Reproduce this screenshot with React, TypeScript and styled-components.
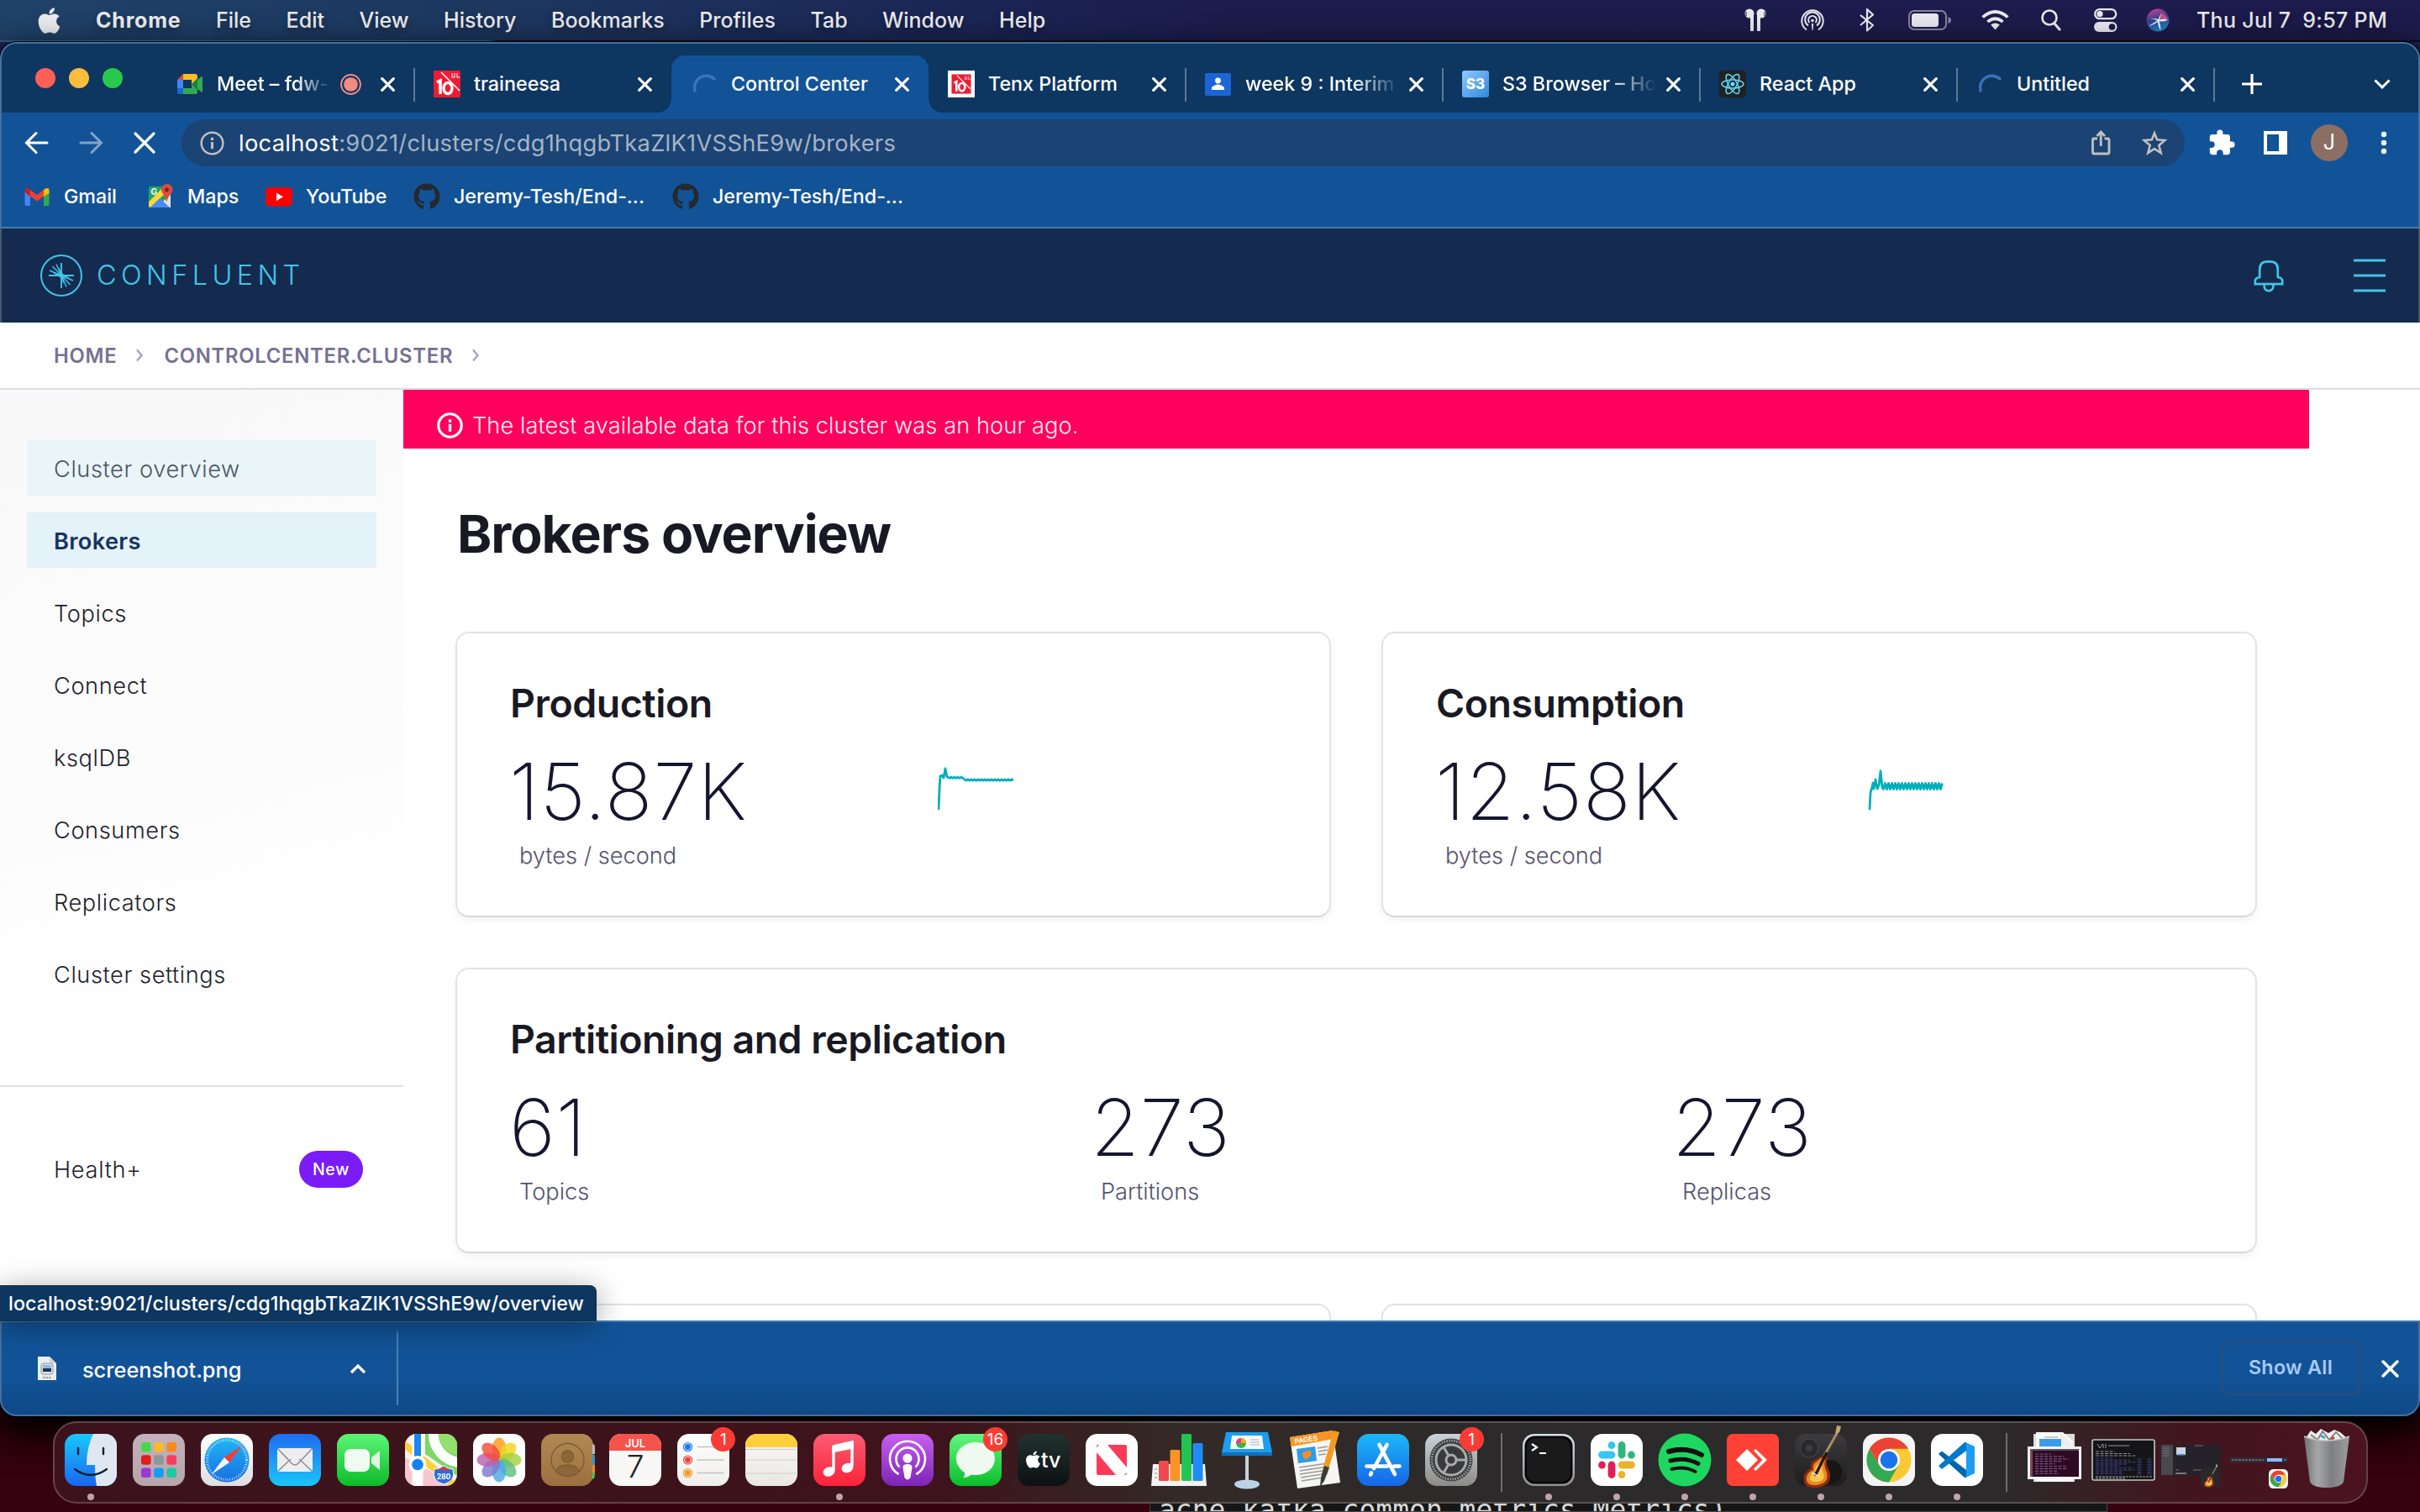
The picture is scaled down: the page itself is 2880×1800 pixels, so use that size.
import React from "react";
import styled, { createGlobalStyle, css } from "styled-components";
import { FaApple, FaGithub } from "react-icons/fa";
import { MdExtension } from "react-icons/md";

const UI = `Inter, "Liberation Sans", sans-serif`;
const CYAN = "#43c3e6";

const Global = createGlobalStyle`
  * { box-sizing: border-box; }
  html, body { margin: 0; padding: 0; width: 2880px; height: 1800px; overflow: hidden; }
  body { font-family: ${UI}; -webkit-font-smoothing: antialiased; }
  svg { display: block; flex: none; }
`;

const Desktop = styled.div`
  position: relative;
  width: 2880px;
  height: 1800px;
  overflow: hidden;
  display: flex;
  flex-direction: column;
  background: linear-gradient(180deg, #24557c 0, #1c1c4b 60px, #1c1c4b 900px, #2c000c 1500px, #37020f 100%);
`;

/* ---------- macOS menu bar ---------- */
const MenuBar = styled.header`
  height: 48px;
  flex: none;
  display: flex;
  align-items: center;
  padding: 0 39px 0 41px;
  color: #ebebf0;
  font-size: 25px;
  font-weight: 500;
  background: linear-gradient(90deg, #1f4268 0, #1d375f 600px, #1b2252 1250px, #1c1b4b 1500px, #1d1b4b 100%);
  text-shadow: 0 4px 8px rgba(0, 0, 0, 0.35);
`;
const MenuEdge = styled.div`
  height: 2px;
  flex: none;
  background: linear-gradient(90deg, #34618a 0, #2f7ea8 140px, #2a6e98 580px, #11102e 590px, #0b0b20 100%);
`;
const MenuItems = styled.nav`
  display: flex;
  margin-left: 38px;
  gap: 41.5px;
  flex: 1;
`;
const MenuItem = styled.span<{ $strong?: boolean }>`
  line-height: 47px;
  letter-spacing: 0.02px;
  ${(p) => p.$strong && css`font-weight: 700; letter-spacing: 0.8px;`}
`;
const StatusIcons = styled.div`
  display: flex;
  align-items: center;
  color: #e8e8ee;
`;
const StatusIcon = styled.span<{ $w: number; $gap: number }>`
  display: flex;
  justify-content: center;
  width: ${(p) => p.$w}px;
  margin-right: ${(p) => p.$gap}px;
`;
const Clock = styled.span`
  letter-spacing: 0.3px;
  white-space: pre;
  line-height: 46px;
`;

/* ---------- browser window ---------- */
const Window = styled.section`
  position: relative;
  height: 1636px;
  flex: none;
  display: flex;
  flex-direction: column;
  padding: 2px;
  border-radius: 20px;
  overflow: hidden;
  background: #125398;
  box-shadow: 0 0 0 1px #000, 0 18px 40px 6px #000;
  z-index: 1;
  &::before {
    content: "";
    position: absolute;
    inset: 0;
    border: 2px solid #47719b;
    border-radius: 20px;
    z-index: 1;
    pointer-events: none;
  }
`;
const TabStrip = styled.div`
  height: 84px;
  flex: none;
  display: flex;
  margin: -2px -2px 0;
  padding: 2px 2px 0;
  background: #0d3660;
  color: #fff;
`;
const Lights = styled.div`
  width: 185px;
  display: flex;
  align-items: center;
  gap: 16px;
  padding-left: 40px;
`;
const Light = styled.i<{ $c: string }>`
  width: 24px;
  height: 24px;
  border-radius: 50%;
  background: ${(p) => p.$c};
`;
const Tabs = styled.div`
  display: flex;
  padding-top: 14px;
`;
const TabBox = styled.div<{ $active?: boolean; $line?: boolean }>`
  position: relative;
  width: 306px;
  height: 68px;
  display: flex;
  align-items: center;
  padding: 0 23px;
  font-size: 23.3px;
  font-weight: 500;
  border-radius: 16px 16px 0 0;
  background: ${(p) => (p.$active ? "#125398" : "transparent")};
  ${(p) =>
    p.$line &&
    css`
      &::after {
        content: "";
        position: absolute;
        right: -1px;
        top: 15px;
        width: 2px;
        height: 40px;
        background: #5d7994;
      }
    `}
  ${(p) =>
    p.$active &&
    css`
      &::before,
      &::after {
        content: "";
        position: absolute;
        bottom: 0;
        width: 16px;
        height: 16px;
      }
      &::before { left: -16px; background: radial-gradient(circle at 0 0, transparent 15.5px, #125398 16px); }
      &::after { right: -16px; background: radial-gradient(circle at 100% 0, transparent 15.5px, #125398 16px); }
    `}
`;
const TabTitle = styled.span<{ $fade?: boolean }>`
  flex: 1;
  min-width: 0;
  margin-left: 16px;
  line-height: 66px;
  white-space: nowrap;
  overflow: hidden;
  ${(p) => p.$fade && css`mask-image: linear-gradient(90deg, #000 70%, transparent 100%);`}
`;
const TabEnd = styled.span`
  display: flex;
  align-items: center;
  gap: 23px;
  padding-left: 12px;
`;
const StripEnd = styled.div`
  flex: 1;
  display: flex;
  align-items: center;
  justify-content: space-between;
  padding: 14px 33px 0 33px;
`;
const Toolbar = styled.div`
  height: 72px;
  flex: none;
  display: flex;
  align-items: center;
  color: #fff;
  padding-left: 26px;
`;
const NavButtons = styled.div`
  display: flex;
  gap: 32px;
  width: 188px;
`;
const Omnibox = styled.div`
  width: 2384px;
  height: 56px;
  display: flex;
  align-items: center;
  border-radius: 28px;
  background: #1b4373;
  padding: 0 21px 0 22px;
`;
const Url = styled.span`
  flex: 1;
  margin-left: 17px;
  font-size: 27.3px;
  letter-spacing: 0.28px;
  color: #a4b4c7;
`;
const Host = styled.b`
  font-weight: 400;
  color: #fff;
`;
const OmniEnd = styled.div`
  display: flex;
  gap: 34px;
`;
const ToolEnd = styled.div`
  flex: 1;
  display: grid;
  grid-template-columns: 61px 57px 82px auto;
  align-items: center;
  padding-left: 27px;
`;
const PanelIcon = styled.svg`
  margin-left: 6px;
`;
const Avatar = styled.span`
  width: 44px;
  height: 44px;
  margin-left: 5px;
  border-radius: 50%;
  background: #8d6e63;
  font-size: 25px;
  line-height: 43px;
  text-align: center;
`;
const Bookmarks = styled.nav`
  height: 66px;
  flex: none;
  display: flex;
  align-items: center;
  padding: 0 26px 8px;
  border-bottom: 2px solid #447aaf;
  color: #fff;
  font-size: 23.3px;
  font-weight: 500;
`;
const Bookmark = styled.span<{ $w: number }>`
  width: ${(p) => p.$w}px;
  display: flex;
  align-items: center;
  gap: 16px;
  line-height: 56px;
  letter-spacing: -0.05px;
  white-space: nowrap;
`;

/* ---------- Control Center page ---------- */
const Page = styled.div`
  position: relative;
  z-index: 2;
  height: 1300px;
  flex: none;
  margin: 0 -2px;
  display: flex;
  flex-direction: column;
  background: #fff;
  overflow: hidden;
`;
const PageHeader = styled.header`
  height: 112px;
  flex: none;
  display: flex;
  align-items: center;
  justify-content: space-between;
  padding: 0 39px 0 46px;
  border: solid #46586f;
  border-width: 0 2px;
  background: #142b4f;
`;
const Brand = styled.div`
  display: flex;
  align-items: center;
  gap: 17px;
  color: ${CYAN};
  font-size: 32.5px;
  font-weight: 300;
  letter-spacing: 5.4px;
  line-height: 60px;
`;
const HeaderIcons = styled.div`
  display: flex;
  align-items: center;
  gap: 83px;
`;
const Crumbs = styled.nav`
  height: 80px;
  flex: none;
  display: flex;
  align-items: center;
  padding-left: 64px;
  border-bottom: 2px solid #dcdce5;
  color: #767193;
  font-size: 23.8px;
  font-weight: 600;
  letter-spacing: 0.75px;
`;
const CrumbArrow = styled.svg`
  margin: 0 24px 0 22px;
`;
const Body = styled.div`
  flex: 1;
  min-height: 0;
  display: flex;
`;
const Sidebar = styled.aside`
  width: 480px;
  flex: none;
  padding-top: 60px;
  background: linear-gradient(165deg, #f9f9fa 0, #fbfbfc 380px, #fff 800px);
`;
const NavList = styled.ul`
  list-style: none;
  margin: 0;
  padding: 0 32px 100px;
  display: flex;
  flex-direction: column;
  gap: 20px;
  border-bottom: 2px solid #dedfe6;
`;
const NavLink = styled.li<{ $state?: "hover" | "active" }>`
  height: 66px;
  padding-left: 32px;
  line-height: 69px;
  font-size: 27.2px;
  letter-spacing: ${(p) => (p.$state === "active" ? 0.35 : 0.6)}px;
  font-weight: ${(p) => (p.$state === "active" ? 600 : 300)};
  color: ${(p) => (p.$state === "active" ? "#173361" : p.$state === "hover" ? "#4c5560" : "#1e1f2b")};
  background: ${(p) => (p.$state === "active" ? "#e4f2fa" : p.$state === "hover" ? "#eaf5fa" : "none")};
`;
const HealthRow = styled.div`
  margin-top: 65px;
  height: 66px;
  display: flex;
  align-items: center;
  justify-content: space-between;
  padding: 0 48px 0 64px;
  font-size: 27.2px;
  font-weight: 300;
  letter-spacing: 0.7px;
  color: #1e1f2b;
`;
const NewPill = styled.span`
  width: 76px;
  height: 44px;
  border-radius: 22px;
  background: #7a1cf5;
  color: #fff;
  font-size: 19.5px;
  font-weight: 500;
  line-height: 44px;
  text-align: center;
`;
const Main = styled.main`
  width: 2268px;
`;
const Banner = styled.div`
  height: 70px;
  display: flex;
  align-items: center;
  padding: 15px 0 0 40px;
  gap: 11px;
  background: #ff005c;
  color: #ffeef4;
  font-size: 27.2px;
  font-weight: 300;
  letter-spacing: 0.08px;
`;
const Content = styled.div`
  padding: 61px 62px 0;
`;
const Heading = styled.h1`
  margin: 0 0 77px;
  padding-left: 2px;
  font-size: 62.5px;
  line-height: 80px;
  font-weight: 700;
  letter-spacing: -1px;
  color: #191924;
`;
const Cards = styled.div`
  display: grid;
  grid-template-columns: 1fr 1fr;
  gap: 60px;
`;
const Card = styled.section<{ $wide?: boolean }>`
  height: 340px;
  grid-column: ${(p) => (p.$wide ? "1 / -1" : "auto")};
  padding: 53px 0 0 62px;
  border: 2px solid #e3e3e6;
  border-bottom-color: #d9d9dc;
  border-radius: 16px;
  background: #fff;
  box-shadow: 0 4px 8px rgba(0, 0, 0, 0.06);
`;
const CardTitle = styled.h2`
  margin: 0 0 20px;
  padding-left: 1px;
  font-size: 46.5px;
  line-height: 60px;
  font-weight: 600;
  letter-spacing: -0.5px;
  color: #191924;
`;
const Metrics = styled.div`
  display: grid;
  grid-template-columns: 510px 120px;
`;
const Stats = styled.div`
  display: grid;
  grid-template-columns: 692px 692px auto;
`;
const Value = styled.div`
  font-size: 94px;
  line-height: 110px;
  font-weight: 200;
  letter-spacing: 0.8px;
  color: #15152f;
`;
const Label = styled.div`
  margin-top: 2px;
  padding-left: 12px;
  font-size: 27.2px;
  line-height: 40px;
  font-weight: 300;
  color: #55536f;
`;
const Spark = styled.svg`
  margin-top: 23px;
`;

/* ---------- downloads shelf ---------- */
const Shelf = styled.footer`
  flex: 1;
  display: flex;
  align-items: center;
  margin: 0 -2px -2px;
  padding: 0 25px 2px 44px;
  border-top: 2px solid #447aaf;
  color: #fff;
  background: linear-gradient(180deg, #125398 0, #125398 55%, #0f4986 100%);
`;
const DownloadItem = styled.div`
  width: 430px;
  height: 88px;
  display: flex;
  align-items: center;
  border-right: 2px solid #4d80b2;
  font-size: 25.3px;
  font-weight: 500;
`;
const FileName = styled.span`
  flex: 1;
  margin-left: 30px;
  line-height: 88px;
  padding-top: 4px;
`;
const Caret = styled.svg`
  margin-right: 36px;
`;
const ShelfSpace = styled.div`
  flex: 1;
`;
const ShowAll = styled.button`
  width: 164px;
  height: 64px;
  margin-right: 26px;
  padding: 0 0 3px;
  border: 2px solid #2d4d74;
  border-radius: 8px;
  background: none;
  color: #a9c7f5;
  font: 600 23.3px ${UI};
  letter-spacing: 0.3px;
`;
const StatusBubble = styled.div`
  position: absolute;
  left: 0;
  top: 1530px;
  width: 710px;
  height: 43px;
  padding-left: 10px;
  border: solid #1d2b3a;
  border-width: 1px 1px 1px 0;
  border-radius: 0 8px 0 0;
  background: #0d3660;
  color: #fff;
  font-size: 23.3px;
  font-weight: 500;
  line-height: 41px;
  letter-spacing: 0.05px;
  white-space: nowrap;
  box-shadow: 0 6px 36px rgba(0, 0, 0, 0.38);
  z-index: 2;
`;

/* ---------- terminal behind the dock ---------- */
const Terminal = styled.div`
  position: absolute;
  left: 1368px;
  top: 1600px;
  width: 1140px;
  height: 200px;
  padding: 178px 0 0 10px;
  border: 1px solid #454545;
  background: #161616;
  color: #d8d8d8;
  font: 33px/38px "DejaVu Sans Mono", monospace;
  white-space: pre;
  overflow: hidden;
`;

/* ---------- dock ---------- */
const DockArea = styled.div`
  flex: 1;
  display: flex;
  padding: 6px 62px 10px 63px;
  z-index: 1;
`;
const Dock = styled.div`
  flex: 1;
  height: 98px;
  display: flex;
  border: 2px solid rgba(255, 255, 255, 0.2);
  border-radius: 28px;
  padding-left: 3px;
  background: linear-gradient(90deg, #3c131c 0, #3e131b 38%, #332a27 49%, #2c2a2b 62%, #2c2a2b 84%, #42161f 92%, #4a131f 100%);
  z-index: 1;
`;
const Slot = styled.div`
  position: relative;
  width: 80.95px;
  flex: none;
  display: flex;
  flex-direction: column;
  align-items: center;
  padding-top: 13px;
`;
const DockSvg = styled.svg`
  width: 62px;
  height: 62px;
  overflow: visible;
`;
const RunDot = styled.i`
  width: 8px;
  height: 8px;
  margin-top: 9px;
  border-radius: 50%;
  background: #c0a3ab;
`;
const Badge = styled.span`
  position: absolute;
  top: 5px;
  right: 2px;
  width: 29px;
  height: 29px;
  border-radius: 50%;
  background: #fb3c35;
  color: #fff;
  font-size: 19px;
  line-height: 29px;
  text-align: center;
`;
const DockLine = styled.i<{ $l: number; $r: number }>`
  width: 2px;
  height: 70px;
  margin: 12px ${(p) => p.$r}px 0 ${(p) => p.$l}px;
  background: rgba(255, 255, 255, 0.32);
`;
const Shelved = styled.svg<{ $gap: number }>`
  margin-right: ${(p) => p.$gap}px;
  overflow: visible;
`;

/* ---------- small drawings ---------- */
const Cross = ({ s = 17, w = 3.2 }: { s?: number; w?: number }) => (
  <svg width={s} height={s} viewBox="0 0 20 20" stroke="#fff" strokeWidth={(w * 20) / s} strokeLinecap="round">
    <path d="M2 2L18 18M18 2L2 18" />
  </svg>
);
const Spinner = ({ c }: { c: string }) => (
  <svg width="32" height="32" viewBox="0 0 32 32" fill="none" stroke={c} strokeWidth="3.6" strokeLinecap="round">
    <path d="M5 24 A14 14 0 0 1 28 10" />
  </svg>
);
const MeetIcon = () => (
  <svg width="32" height="32" viewBox="0 0 32 32">
    <path d="M1 11L8 4V11Z" fill="#ea4335" />
    <path d="M1 11H8V21H1Z" fill="#4285f4" />
    <path d="M1 21H8V28H3Q1 28 1 26Z" fill="#1967d2" />
    <path d="M8 4H22Q25 4 25 7V11L18 17V11H8Z" fill="#fbbc2a" />
    <path d="M8 21H18V16L25 22V26Q25 28 22 28H8Z" fill="#34a853" />
    <path d="M18 16L25 9V23Z" fill="#188038" />
    <path d="M25 11L30 7Q31 7 31 8V25Q30 26 29 25L25 22Z" fill="#34a853" />
  </svg>
);
const RecordIcon = () => (
  <svg width="25" height="25" viewBox="0 0 24 24">
    <circle cx="12" cy="12" r="11" fill="none" stroke="#f28b82" strokeWidth="1.8" />
    <circle cx="12" cy="12" r="8" fill="#f28b82" />
  </svg>
);
const TenIcon = ({ framed }: { framed?: boolean }) => (
  <svg width="32" height="32" viewBox="0 0 32 32">
    <rect width="32" height="32" fill={framed ? "#fff" : "#ee1c33"} />
    <g transform={framed ? "translate(4.5 4.5) scale(.72)" : ""}>
      <rect width="32" height="32" fill="#ee1c33" />
      <path d="M9 2L31 24" stroke="#fff" strokeWidth="1.6" />
      <path d="M4 14L8 12V28" stroke="#fff" strokeWidth="3.6" fill="none" />
      <ellipse cx="17" cy="21" rx="5" ry="6.5" stroke="#fff" strokeWidth="3.4" fill="none" />
      <path d="M22 3V8H25V3M28 3V8H31" stroke="#ffc3c8" strokeWidth="1.4" fill="none" />
    </g>
  </svg>
);
const ClassIcon = () => (
  <svg width="32" height="32" viewBox="0 0 32 32">
    <rect x="0" y="3" width="31" height="27" rx="2" fill="#1a66d6" />
    <circle cx="15.500" cy="12" r="3.400" fill="#fff" />
    <path d="M8 23V20Q12 16.500 15.500 16.500T23 20V23Z" fill="#fff" />
  </svg>
);
const S3Icon = () => (
  <svg width="32" height="32" viewBox="0 0 32 32">
    <defs>
      <linearGradient id="s3" x1="0" y1="0" x2="1" y2="1">
        <stop offset="0" stopColor="#8ecbff" />
        <stop offset="1" stopColor="#2f86dc" />
      </linearGradient>
    </defs>
    <rect width="32" height="32" rx="3" fill="url(#s3)" />
    <text x="16" y="22" fontFamily="Inter" fontWeight="800" fontSize="17" fill="#fff" textAnchor="middle">S3</text>
  </svg>
);
const ReactIcon = () => (
  <svg width="32" height="32" viewBox="0 0 32 32">
    <rect width="32" height="32" rx="4" fill="#222" />
    <circle cx="16" cy="16" r="2.6" fill="#61dafb" />
    <g fill="none" stroke="#61dafb" strokeWidth="1.5">
      <ellipse cx="16" cy="16" rx="13" ry="5" />
      <ellipse cx="16" cy="16" rx="13" ry="5" transform="rotate(60 16 16)" />
      <ellipse cx="16" cy="16" rx="13" ry="5" transform="rotate(120 16 16)" />
    </g>
  </svg>
);
const GmailIcon = () => (
  <svg width="32" height="32" viewBox="0 0 32 32">
    <path d="M1.500 10V25Q1.500 27 3.500 27H8V14Z" fill="#4285f4" />
    <path d="M30.500 10V25Q30.500 27 28.500 27H24V14Z" fill="#34a853" />
    <path d="M24 14V8L26 6.500Q30.500 4.500 30.500 9V12L24 16Z" fill="#fbbc04" />
    <path d="M8 8L16 14L24 8V15.500L16 21.500L8 15.500Z" fill="#ea4335" />
    <path d="M8 14V8L6 6.500Q1.500 4.500 1.500 9V11L8 16Z" fill="#c5221f" />
  </svg>
);
const MapsIcon = () => (
  <svg width="32" height="32" viewBox="0 0 32 32">
    <rect x="2" y="4" width="26" height="25" rx="2" fill="#1fa463" />
    <path d="M28 13L12 29H28Z" fill="#dfe3e8" />
    <path d="M2 22L18 6L24 10L4 29Q2 29 2 27Z" fill="#fdd835" />
    <path d="M2 22L16 8L2 6Z" fill="#1fa463" />
    <path d="M15 18L27 29H4Z" fill="#4a8af4" />
    <path d="M23 23Q22 16 18.500 12A6.800 6.800 0 1 1 29 12Q25 16 23 23Z" fill="#dc4b3e" />
    <circle cx="23.500" cy="8" r="2.400" fill="#7b231c" />
    <text x="4.500" y="14" fontFamily="Inter" fontWeight="700" fontSize="10" fill="#fff">G</text>
  </svg>
);
const YoutubeIcon = () => (
  <svg width="32" height="32" viewBox="0 0 32 32">
    <rect y="5" width="32" height="22.500" rx="5" fill="#f00" />
    <path d="M13 11.500L21 16.200L13 21Z" fill="#fff" />
  </svg>
);
const ConfluentMark = () => (
  <svg width="50" height="50" viewBox="0 0 50 50" fill="none" stroke={CYAN}>
    <circle cx="25" cy="25" r="24" strokeWidth="2" />
    <path d="M25 10V40M10 25H40" strokeWidth="1.900" />
    <path d="M25 25L19 11.500M25 25L14.500 14M25 25L11 19M25 25L31 38.500M25 25L35.500 36M25 25L39 31M25 25L22 16M25 25L16 22M25 25L28 34M25 25L34 28" strokeWidth="1.400" />
    <path d="M25 21L29 25L25 29L21 25Z" fill={CYAN} stroke="none" />
  </svg>
);
const BellIcon = () => (
  <svg width="36" height="42" viewBox="0 -2 36 42" fill="none" stroke={CYAN} strokeWidth="2.700">
    <path d="M7.200 21V12Q7.200 2.400 16.500 2.400H19.500Q28.800 2.400 28.800 12V21Q34.200 22 34.200 25.500V29.200H1.800V25.500Q1.800 22 7.200 21Z" />
    <path d="M12.500 30Q12.500 37.300 18 37.300T23.500 30" />
  </svg>
);
const Burger = () => (
  <svg width="38" height="40" viewBox="0 0 38 40" fill={CYAN}>
    <path d="M0 .5H38V3.500H0ZM0 18.500H38V21.500H0ZM0 36.500H38V39.500H0Z" />
  </svg>
);
const InfoIcon = ({ c, s, w }: { c: string; s: number; w: number }) => (
  <svg width={s} height={s} viewBox="0 0 28 28">
    <circle cx="14" cy="14" r="12.400" fill="none" stroke={c} strokeWidth={w} />
    <path d="M12.500 7.500H15.500V10.500H12.500ZM12.500 12.500H15.500V20.500H12.500Z" fill={c} />
  </svg>
);

/* ---------- dock artwork, each on a 62px tile ---------- */
const Tile = ({ fill, children, id }: { fill: string | [string, string]; id?: string; children?: React.ReactNode }) => (
  <DockSvg viewBox="0 0 62 62">
    {Array.isArray(fill) && (
      <linearGradient id={id} x1="0" y1="0" x2="0" y2="1">
        <stop offset="0" stopColor={fill[0]} />
        <stop offset="1" stopColor={fill[1]} />
      </linearGradient>
    )}
    <clipPath id={"c" + id}><rect width="62" height="62" rx="14" /></clipPath>
    <rect width="62" height="62" rx="14" fill={Array.isArray(fill) ? `url(#${id})` : fill} />
    {children}
  </DockSvg>
);
const Finder = () => (
  <Tile id="fi" fill={["#18c8fb", "#1a66f0"]}>
    <path clipPath="url(#cfi)" d="M34 0H62V62H38Q36 52 36 37H26Q26 16 34 0Z" fill="#dfe7f2" />
    <path d="M16 17V24M46 17V24M12 42Q31 56 50 42" stroke="#14202c" strokeWidth="2.400" fill="none" strokeLinecap="round" />
  </Tile>
);
const Launchpad = () => (
  <Tile id="la" fill={["#c3b2bb", "#b7a5ab"]}>
    {["#43d94a", "#fdb92c", "#f78a1f", "#e21b1b", "#8f979c", "#fb3b5e", "#9a3bd0", "#149df4", "#1fc8a0"].map((c, i) => (
      <rect key={c} x={10 + (i % 3) * 15.200} y={10 + Math.floor(i / 3) * 15.200} width="11.600" height="11.600" rx="3.200" fill={c} />
    ))}
  </Tile>
);
const Safari = () => (
  <Tile id="sa" fill={["#ffffff", "#dedee0"]}>
    <linearGradient id="sb" x1="0" y1="0" x2="0" y2="1"><stop stopColor="#1fb6f6" /><stop offset="1" stopColor="#1a6fe0" /></linearGradient>
    <circle cx="31" cy="31" r="26.500" fill="url(#sb)" />
    <circle cx="31" cy="31" r="23.500" fill="none" stroke="#d7ecfb" strokeWidth="3" strokeDasharray="0.800 1.900" />
    <path d="M49 14L34 34L28 28Z" fill="#fb3b30" />
    <path d="M13 48L28 28L34 34Z" fill="#f4f6f8" />
  </Tile>
);
const Mail = () => (
  <Tile id="ma" fill={["#1f6cf0", "#1ac6fb"]}>
    <rect x="10" y="17" width="42" height="28" rx="3" fill="#eeeeee" />
    <path d="M11 44L26 30M51 44L36 30M11 18L27 35Q31 39 35 35L51 18" stroke="#8b8f94" strokeWidth="1.500" fill="none" />
  </Tile>
);
const Facetime = () => (
  <Tile id="fa" fill={["#5df577", "#0cbc29"]}>
    <rect x="9" y="18" width="30" height="27" rx="7" fill="#effbf0" />
    <path d="M41 28L51 20V43L41 35Z" fill="#dff5e1" />
  </Tile>
);
const Maps = () => (
  <Tile id="mp" fill="#f6f3ec">
    <g clipPath="url(#cmp)">
      <path d="M0 28L62 62H0Z" fill="#f6c5cd" />
      <path d="M24 0H62V50L24 24Z" fill="#7fd668" />
      <path d="M34 -2A34 34 0 0 0 68 34" stroke="#fff" strokeWidth="12" fill="none" />
      <path d="M40 -2A28 28 0 0 0 68 26V-2Z" fill="#93e070" />
      <path d="M-4 10L60 62" stroke="#fbcf3c" strokeWidth="8" />
      <path d="M15 -2V64" stroke="#fff" strokeWidth="13" />
      <path d="M15 -2V30" stroke="#1b86f4" strokeWidth="8" />
      <circle cx="15" cy="36.500" r="10.500" fill="#fff" />
      <circle cx="15" cy="36.500" r="6.800" fill="#1281f5" />
    </g>
    <path d="M35 42Q40 42 46 38Q52 42 57 42Q61 56 46 60Q31 56 35 42Z" fill="#2f6bd6" stroke="#fff" />
    <path d="M35.500 43Q40 43 46 39Q52 43 56.500 43Z" fill="#e03a3a" />
    <text x="46" y="53.500" fontFamily="Inter" fontWeight="700" fontSize="8.500" fill="#fff" textAnchor="middle">280</text>
  </Tile>
);
const Photos = () => (
  <Tile id="ph" fill="#fdfdfd">
    {["#fb9a1c", "#f2d51c", "#a4d13a", "#5cbf83", "#4aa9e6", "#7c79d0", "#bb62ac", "#f44b3c"].map((c, i) => (
      <ellipse key={c} cx="31" cy="17.500" rx="8.300" ry="13" fill={c} opacity=".82" transform={`rotate(${i * 45} 31 31)`} />
    ))}
  </Tile>
);
const Contacts = () => (
  <Tile id="co" fill={["#b08a52", "#9d6f40"]}>
    <path d="M61 12Q64 12 64 16V24H61Z" fill="#b9bcc0" /><path d="M61 25H64V37H61Z" fill="#2a93d8" /><path d="M61 37H64V46H61Z" fill="#f08a24" /><path d="M61 46H64Q64 54 61 54Z" fill="#4ac55a" />
    <g fill="none" stroke="#7f5c33" strokeWidth="1.400">
      <circle cx="31.500" cy="31" r="19.500" />
      <circle cx="31.500" cy="27" r="7" fill="#8d6739" />
      <path d="M18 45Q20 37 31.500 37T45 45Q31 56 18 45Z" fill="#8d6739" />
    </g>
  </Tile>
);
const Calendar = () => (
  <Tile id="ca" fill="#f8f7f6">
    <path clipPath="url(#cca)" d="M0 0H62V20H0Z" fill="#f5544c" />
    <text x="31" y="15.500" fontFamily="Inter" fontWeight="600" fontSize="13" fill="#fff" textAnchor="middle">JUL</text>
    <text x="31" y="52" fontFamily="Inter" fontWeight="300" fontSize="37" fill="#222" textAnchor="middle">7</text>
  </Tile>
);
const Reminders = () => (
  <Tile id="re" fill={["#ffffff", "#efeeec"]}>
    {["#1379f2", "#f0423b", "#f39a23"].map((c, i) => (
      <g key={c} transform={`translate(12.500 ${15.500 + i * 15.500})`}>
        <circle r="5" fill="none" stroke={c} strokeWidth="1.200" /><circle r="3.400" fill={c} />
        <path d="M11 0H43" stroke="#c3c3c5" strokeWidth="1.300" />
      </g>
    ))}
  </Tile>
);
const Notes = () => (
  <Tile id="no" fill={["#fbfaf7", "#e9e7e2"]}>
    <path clipPath="url(#cno)" d="M0 0H62V16H0Z" fill="#fdcf3b" />
    <path d="M0 18.500H62" stroke="#aaa" strokeWidth="1.500" strokeDasharray="1 1.300" />
    <path d="M1 31H61M1 47H61" stroke="#cfcdc8" strokeWidth="1.200" />
  </Tile>
);
const Music = () => (
  <Tile id="mu" fill={["#fc5c74", "#fa2339"]}>
    <path d="M24 15L46 10V38.500M24 15V44" stroke="#fff" strokeWidth="3.400" fill="none" />
    <path d="M22.300 14L47.700 9V17.500L22.300 22.500Z" fill="#fff" />
    <ellipse cx="18.500" cy="45" rx="7" ry="5.600" fill="#fff" transform="rotate(-20 18.500 45)" />
    <ellipse cx="40.500" cy="40.500" rx="7" ry="5.600" fill="#fff" transform="rotate(-20 40.500 40.500)" />
  </Tile>
);
const Podcasts = () => (
  <Tile id="po" fill={["#c85ff0", "#7c25b4"]}>
    <g fill="none" stroke="#fff" strokeWidth="2.600">
      <path d="M20.500 48A21 21 0 1 1 41.500 48" />
      <path d="M21.500 39.500A13.500 13.500 0 1 1 40.500 39.500" />
    </g>
    <circle cx="31" cy="29" r="5.500" fill="#fff" />
    <path d="M25.500 40Q25.500 36 31 36T36.500 40L34.500 52Q31 57 27.500 52Z" fill="#fff" />
  </Tile>
);
const Messages = () => (
  <Tile id="me" fill={["#62f67e", "#0bbd2c"]}>
    <path d="M31 10C44 10 54 18.500 54 29.500S44 49 31 49Q28 49 26 48.500Q22 52 16.500 52Q19 49 18 46C12 42 8 36 8 29.500C8 18.500 18 10 31 10Z" fill="#eefaef" />
  </Tile>
);
const AppleTv = () => (
  <Tile id="tv" fill={["#22322f", "#0c1113"]}>
    <g transform="translate(7 19)"><FaApple size={23} color="#fff" /></g>
    <text x="28" y="39.500" fontFamily="Inter" fontWeight="500" fontSize="25" fill="#fff">tv</text>
  </Tile>
);
const News = () => (
  <Tile id="ne" fill="#fff">
    <path d="M26 13H47Q49 13 49 15V40Z" fill="#fb3a58" />
    <path d="M13 22L36 49H15Q13 49 13 47Z" fill="#fb3a58" />
    <path d="M13 15Q13 13 15 13H16L13 16ZM49 47Q49 49 47 49H46L49 46Z" fill="#fb3a58" />
  </Tile>
);
const Numbers = () => (
  <DockSvg viewBox="0 0 62 62">
    <path d="M0 36H62L64 62H-2Z" fill="#f3f3f3" />
    <path d="M2 42H5M2 47H5M2 52H5" stroke="#888" />
    <rect x="7" y="32" width="12" height="24" rx="1.500" fill="#f04a50" />
    <rect x="20.500" y="19" width="12" height="37" rx="1.500" fill="#fb9425" />
    <rect x="34" y="0" width="12" height="56" rx="1.500" fill="#23c552" />
    <rect x="47.500" y="11" width="12" height="45" rx="1.500" fill="#1f8cf5" />
  </DockSvg>
);
const Keynote = () => (
  <DockSvg viewBox="0 0 62 62">
    <ellipse cx="31" cy="60" rx="15" ry="5.500" fill="#b9d3e8" />
    <path d="M29 26H33V60H29Z" fill="#c9d2da" />
    <path d="M6 -2H56L61 22V25H1V22Z" fill="#1c9df0" />
    <path d="M1 22H61V26H1Z" fill="#0c72bd" />
    <path d="M13 2H49L51 18H11Z" fill="#f8fafc" />
    <circle cx="24" cy="11" r="6" fill="#37b34a" /><path d="M24 11V5A6 6 0 0 1 30 11Z" fill="#f9a61a" /><path d="M24 11H18A6 6 0 0 1 24 5Z" fill="#e2379a" />
    <path d="M35 7H45M35 10H46M35 13H46" stroke="#a9b2ba" />
  </DockSvg>
);
const Pages = () => (
  <DockSvg viewBox="0 0 62 62">
    <path d="M1 4L52 -4L61 58L10 65Z" fill="#f5f5f2" />
    <path d="M1 4L52 -4L53 6L3 15Z" fill="#f99423" />
    <text x="7" y="12" fontFamily="Inter" fontWeight="600" fontSize="8.500" fill="#fff" transform="rotate(-9 7 12)">PAGES</text>
    <path d="M9 18L31 15L33 32L11 35Z" fill="#2d9be6" />
    <path d="M20 31Q11 22 20 21Q29 17 26 26Z" fill="#f68b2c" />
    <path d="M34 17L46 15M35 21L46 19M35 25L44 24M12 40L46 35M13 44L46 39M13 48L46 43M14 52L46 47M15 56L40 52" stroke="#9a9a9a" strokeWidth="1.300" />
    <path d="M53 -4L60 -2L45 49L39 46Z" fill="#f39a1f" />
    <path d="M42 38L48 40L42 56L37 63L38 52Z" fill="#3b3b3b" />
  </DockSvg>
);
const AppStore = () => (
  <Tile id="as" fill={["#1cb9f8", "#1665e8"]}>
    <g stroke="#fff" strokeWidth="4.600" strokeLinecap="round">
      <path d="M26.500 13L45 48M35.500 13L20 41M11.500 38.500H36M44 38.500H50.500M17 46.500L16 48.500" />
    </g>
  </Tile>
);
const Settings = () => (
  <Tile id="se" fill={["#c9d2d8", "#8d8b88"]}>
    <circle cx="31" cy="31" r="25.500" fill="#3a3a3c" />
    <circle cx="31" cy="31" r="23" fill="none" stroke="#9fa1a3" strokeWidth="3" strokeDasharray="1.500 1.500" />
    <circle cx="31" cy="31" r="18" fill="none" stroke="#a8aaac" strokeWidth="3" />
    <circle cx="31" cy="31" r="6" fill="none" stroke="#a8aaac" strokeWidth="3" />
    <path d="M37 31H49M28 26L22 15.500M28 36L22 46.500" stroke="#a8aaac" strokeWidth="3" />
  </Tile>
);
const TerminalApp = () => (
  <Tile id="te" fill={["#d8e2e8", "#8e9092"]}>
    <rect x="2.500" y="2.500" width="57" height="57" rx="12" fill="#050505" />
    <rect x="5" y="5" width="52" height="52" rx="10" fill="#1a1a1a" />
    <path d="M11 12L17 16L11 20M20 23H28" stroke="#fff" strokeWidth="2.200" fill="none" />
  </Tile>
);
const Slack = () => (
  <Tile id="sl" fill="#fff">
    <g strokeWidth="8.800" strokeLinecap="round">
      <path d="M13.500 25H25" stroke="#36c5f0" /><path d="M25 13.500V13.600" stroke="#36c5f0" />
      <path d="M37 13.500V25" stroke="#2eb67d" /><path d="M48.500 25V25.100" stroke="#2eb67d" />
      <path d="M37 37H48.500" stroke="#ecb22e" /><path d="M37 48.500V48.600" stroke="#ecb22e" />
      <path d="M25 37V48.500" stroke="#e01e5a" /><path d="M13.500 37V37.100" stroke="#e01e5a" />
    </g>
  </Tile>
);
const Spotify = () => (
  <DockSvg viewBox="0 0 62 62">
    <circle cx="31" cy="31" r="31.500" fill="#1ed760" />
    <g fill="none" stroke="#111" strokeLinecap="round">
      <path d="M12 21Q33 15 51 25" strokeWidth="6" /><path d="M14 32Q32 27 47 35.500" strokeWidth="5" /><path d="M15.500 42Q31 38 43.500 45" strokeWidth="4" />
    </g>
  </DockSvg>
);
const AnyDesk = () => (
  <DockSvg viewBox="0 0 62 62">
    <rect width="62" height="62" rx="7" fill="#ff4136" />
    <path d="M24 18L37 31L24 44L11 31Z" fill="#fff" />
    <path d="M32 20L34.500 18L48 31L34.500 44L32 42L42.500 31Z" fill="#fff" />
  </DockSvg>
);
const Guitar = () => (
  <g>
    <path d="M53 -6L27 40" stroke="#a98a5c" strokeWidth="3" />
    <path d="M50 -10L55 -9L53 -2L48 0Z" fill="#c7a468" />
    <path d="M26 30Q36 22 39 28Q36 36 41 44Q46 60 28 64Q8 66 11 50Q13 44 19 41Q18 32 26 30Z" fill="#8f2e12" />
    <path d="M26 33Q34 25 36 31Q34 38 38 46Q41 58 27 61Q12 62 14 51Q16 45 22 43Q21 35 26 33Z" fill="#ea8a22" />
    <path d="M26 38Q31 32 32 36Q32 42 34 47Q37 55 27 57Q17 58 18 51Q20 47 24 46Q24 40 26 38Z" fill="#fbc648" />
    <path d="M38 22L24 50" stroke="#2a1610" strokeWidth="3.400" />
    <path d="M20 46L29 51" stroke="#ddd" strokeWidth="2" />
  </g>
);
const GarageBand = () => (
  <Tile id="gb" fill={["#3c3c40", "#1c1c1e"]}>
    <circle cx="17" cy="17" r="11" fill="#2a2a2d" stroke="#4a4a4e" /><circle cx="17" cy="17" r="4" fill="#3d3d41" />
    <circle cx="42" cy="45" r="14" fill="#161618" />
    <Guitar />
  </Tile>
);
const ChromeArt = () => (
  <g transform="translate(31 31)">
    <circle r="26.500" fill="#fcc934" />
    <path d="M-22.950 -13.250A26.500 26.500 0 0 0 0 26.500L11.500 6.600L0 0L-11.500 6.600Z" fill="#34a853" />
    <path d="M-22.950 -13.250A26.500 26.500 0 0 1 22.950 -13.250H0L-11.500 6.600Z" fill="#ea4335" />
    <circle r="13" fill="#fff" /><circle r="10.300" fill="#1a73e8" />
  </g>
);
const ChromeApp = () => <Tile id="ch" fill="#f4f4f4"><ChromeArt /></Tile>;
const VSCode = () => (
  <Tile id="vs" fill="#fff">
    <path d="M9 24L13 20.500L42 43V52L40 52Z" fill="#0065a9" />
    <path d="M9 38L13 42L42 20V10L40 10Z" fill="#007acc" />
    <path d="M40 9.500L52 15V47L40 52.500Q42 52 42 48V14Q42 10 40 9.500Z" fill="#1f9cf0" />
  </Tile>
);

const dockLeft: { art: React.FC; run?: boolean; badge?: string }[] = [
  { art: Finder, run: true }, { art: Launchpad }, { art: Safari }, { art: Mail }, { art: Facetime }, { art: Maps },
  { art: Photos }, { art: Contacts }, { art: Calendar }, { art: Reminders, badge: "1" }, { art: Notes },
  { art: Music, run: true }, { art: Podcasts }, { art: Messages, badge: "16" }, { art: AppleTv }, { art: News },
  { art: Numbers }, { art: Keynote }, { art: Pages }, { art: AppStore }, { art: Settings, badge: "1" },
];
const dockApps: typeof dockLeft = [TerminalApp, Slack, Spotify, AnyDesk, GarageBand, ChromeApp, VSCode].map((art) => ({ art, run: true }));

const DockSlot = ({ art: Art, run, badge }: (typeof dockLeft)[number]) => (
  <Slot>
    <Art />
    {run && <RunDot />}
    {badge && <Badge>{badge}</Badge>}
  </Slot>
);

const codeLines = (x: number, y: number, n: number, step: number, w: number, c: string) =>
  Array.from({ length: n }, (_, i) => (
    <path key={i} d={`M${x} ${y + i * step}H${x + w * (0.45 + 0.5 * Math.abs(Math.sin(i * 2.3)))}`} stroke={c} strokeWidth="1.200" strokeDasharray="4 1.500" />
  ));

const DockWindows = () => (
  <>
    <Shelved width="64" height="90" viewBox="0 0 64 90" $gap={12}>
      <path d="M7 13H56V70H7Z" fill="#dcdcdc" /><path d="M10 11H42L54 22V70H10Z" fill="#fafafa" />
      <path d="M20 17H36" stroke="#999" /><path d="M14 19H40V28H14Z" fill="#3c9be8" /><path d="M38 11L54 25V28H42Z" fill="#eee" />
      <path d="M0 28H64V67H0Z" fill="#f4f4f4" /><path d="M3 31H61V64H3Z" fill="#2f0a25" /><path d="M3 31H61V33H3Z" fill="#555" />
      <path d="M3 33H6V64H3Z" fill="#7a4a50" />
      {codeLines(9, 37, 9, 2.900, 42, "#76557f")}
    </Shelved>
    <Shelved width="76" height="90" viewBox="0 0 76 90" $gap={7}>
      <rect x="1" y="20" width="74" height="48" rx="2" fill="#151517" stroke="#c8c8c8" strokeWidth="1.600" />
      <path d="M7 25L10 30L13 25M14 25V30M17 25V30M20 27H45" stroke="#999" fill="none" />
      {codeLines(5, 34, 3, 2.500, 50, "#8c8c8c")}
      {codeLines(5, 42, 9, 2.300, 50, "#3b3b80")}
      <path d="M57 42V62M69 42V62" stroke="#35356f" strokeWidth="5" strokeDasharray="1.300 1" />
      <path d="M5 64H72M5 66H40" stroke="#aaa" strokeDasharray="3 1" />
    </Shelved>
    <Shelved width="71" height="90" viewBox="0 0 71 90" $gap={11}>
      <rect y="26" width="71" height="36" fill="#25222a" /><path d="M0 26H14V62H0Z" fill="#4a484f" />
      <path d="M2 30H10M2 33H10M2 36H9M2 39H10" stroke="#77747c" /><path d="M40 27H50M17 56H21M38 56H50" stroke="#777" />
      <rect x="18" y="29" width="11" height="9" fill="#cbd4df" /><path d="M19 38H28" stroke="#2f78d8" strokeWidth="1.600" />
      <path d="M17 60H30" stroke="#98969b" strokeWidth="1.500" />
      <g transform="translate(47 53) scale(.37)"><rect width="62" height="62" rx="14" fill="#29292c" /><Guitar /></g>
    </Shelved>
    <Shelved width="69" height="90" viewBox="0 0 69 90" $gap={19}>
      <rect y="41" width="69" height="6" fill="#302a33" /><path d="M2 44H40" stroke="#9a979e" strokeWidth="1" strokeDasharray="3 1" />
      <path d="M44 42H62V46H44Z" fill="#8db8f5" /><path d="M64 44H67" stroke="#6fa0e8" />
      <g transform="translate(46 55) scale(.37)"><rect width="62" height="62" rx="14" fill="#f4f4f4" /><ChromeArt /></g>
    </Shelved>
    <Shelved width="54" height="90" viewBox="0 0 54 90" $gap={0}>
      <defs><linearGradient id="tr"><stop stopColor="#6f7173" /><stop offset=".3" stopColor="#a5a7a9" /><stop offset=".6" stopColor="#7d7f81" /><stop offset="1" stopColor="#9b9da0" /></linearGradient></defs>
      <path d="M2 18L8 9L14 13L20 7L29 12L36 8L43 11L50 17L46 24H8Z" fill="#ececec" />
      <path d="M8 14L16 20L22 10L30 20L38 11L46 19" stroke="#777" fill="none" strokeWidth="1.600" />
      <path d="M20 15L25 18" stroke="#3da9d0" strokeWidth="3" /><path d="M32 20L36 17" stroke="#c0503a" strokeWidth="3" />
      <path d="M0 16Q27 26 54 16L47 70Q44 77 27 77T7 70Z" fill="url(#tr)" />
      <path d="M0 16Q27 26 54 16" stroke="#c4c6c8" strokeWidth="1.600" fill="none" />
    </Shelved>
  </>
);

/* ---------- data ---------- */
const menus = ["File", "Edit", "View", "History", "Bookmarks", "Profiles", "Tab", "Window", "Help"];
const tabs: { icon: React.ReactNode; title: string; fade?: boolean; active?: boolean; line?: boolean; rec?: boolean }[] = [
  { icon: <MeetIcon />, title: "Meet – fdw-", fade: true, line: true, rec: true },
  { icon: <TenIcon />, title: "traineesa" },
  { icon: <Spinner c="#3a73b8" />, title: "Control Center", active: true },
  { icon: <TenIcon framed />, title: "Tenx Platform", line: true },
  { icon: <ClassIcon />, title: "week 9 : Interim", fade: true, line: true },
  { icon: <S3Icon />, title: "S3 Browser – Ho", fade: true, line: true },
  { icon: <ReactIcon />, title: "React App", line: true },
  { icon: <Spinner c="#3771b8" />, title: "Untitled", line: true },
];
const bookmarks: { icon: React.ReactNode; name: string; w: number }[] = [
  { icon: <GmailIcon />, name: "Gmail", w: 147 },
  { icon: <MapsIcon />, name: "Maps", w: 141 },
  { icon: <YoutubeIcon />, name: "YouTube", w: 176 },
  { icon: <FaGithub size={32} color="#24292f" />, name: "Jeremy-Tesh/End-...", w: 308 },
  { icon: <FaGithub size={32} color="#24292f" />, name: "Jeremy-Tesh/End-...", w: 308 },
];
const links: { name: string; state?: "hover" | "active" }[] = [
  { name: "Cluster overview", state: "hover" }, { name: "Brokers", state: "active" }, { name: "Topics" }, { name: "Connect" },
  { name: "ksqlDB" }, { name: "Consumers" }, { name: "Replicators" }, { name: "Cluster settings" },
];
const stats = [["61", "Topics"], ["273", "Partitions"], ["273", "Replicas"]];

const productionLine =
  "M1 54L2 30L3 14L5 13L7 16L9 5L11 15" +
  Array.from({ length: 10 }, (_, i) => `L${12 + i * 2} ${i % 2 ? 16.5 : 15}`).join("") +
  Array.from({ length: 30 }, (_, i) => `L${32 + i * 2} ${i % 2 ? 19.2 : 17.8}`).join("");
const consumptionLine =
  "M7 54L8 34L10 27L11 22L12 29L14 18L16 29L18 25L20 8L22 27" +
  Array.from({ length: 36 }, (_, i) => `L${23.5 + i * 2} ${i % 2 ? 22.5 : 29.5}`).join("");

const MetricCard = ({ title, value, line }: { title: string; value: string; line: string }) => (
  <Card>
    <CardTitle>{title}</CardTitle>
    <Metrics>
      <div>
        <Value>{value}</Value>
        <Label>bytes / second</Label>
      </div>
      <Spark width="110" height="60" viewBox="0 0 110 60" fill="none" stroke="#00afba" strokeWidth="2.8" strokeLinejoin="round">
        <path d={line} />
      </Spark>
    </Metrics>
  </Card>
);

const CrumbChevron = () => (
  <CrumbArrow width="10" height="16" viewBox="0 0 10 16" fill="none" stroke="#a6a3bb" strokeWidth="2.4">
    <path d="M2 1.500L7.500 8L2 14.500" />
  </CrumbArrow>
);

export default function App() {
  return (
    <Desktop>
      <Global />
      <MenuBar>
        <FaApple size={35} />
        <MenuItems>
          <MenuItem $strong>Chrome</MenuItem>
          {menus.map((m) => <MenuItem key={m}>{m}</MenuItem>)}
        </MenuItems>
        <StatusIcons>
          <StatusIcon $w={26} $gap={41}>
            <svg width="26" height="28" viewBox="0 0 26 28" fill="currentColor">
              <circle cx="6" cy="6" r="5.500" /><circle cx="20" cy="6" r="5.500" /><path d="M7 7H11V27H7ZM15 7H19V27H15Z" />
              <path d="M2 4V9M24 4V9" stroke="#4b4a70" strokeWidth="1.300" />
            </svg>
          </StatusIcon>
          <StatusIcon $w={28} $gap={41}>
            <svg width="28" height="28" viewBox="0 0 28 28" fill="none" stroke="currentColor" strokeWidth="2">
              <path d="M7 25.500A12.700 12.700 0 1 1 21 25.500M9 20.500A8.800 8.800 0 1 1 19 20.500M10.500 17A4.800 4.800 0 1 1 17.500 17" />
              <circle cx="14" cy="14.500" r="1.800" fill="currentColor" stroke="none" /><path d="M12.800 18H15.200L14.500 26H13.500Z" fill="currentColor" stroke="none" />
            </svg>
          </StatusIcon>
          <StatusIcon $w={20} $gap={39}>
            <svg width="20" height="30" viewBox="0 0 20 30" fill="none" stroke="currentColor" strokeWidth="2.200" strokeLinejoin="round">
              <path d="M2 9L17 21L10 27.500V2L17 8.500L2 21" />
            </svg>
          </StatusIcon>
          <StatusIcon $w={51} $gap={36}>
            <svg width="51" height="24" viewBox="0 0 51 24">
              <rect x="1" y="1" width="44" height="22" rx="6" fill="none" stroke="#8683a3" strokeWidth="2" />
              <rect x="4" y="4" width="32" height="16" rx="3.500" fill="currentColor" /><path d="M47.500 8Q51 9 51 12T47.500 16Z" fill="#8683a3" />
            </svg>
          </StatusIcon>
          <StatusIcon $w={33} $gap={38}>
            <svg width="33" height="26" viewBox="0 0 31 26" preserveAspectRatio="none" fill="none" stroke="currentColor" strokeWidth="3.600">
              <path d="M1.500 9.500Q15.500 -3.500 29.500 9.500M7 15Q15.500 7.500 24 15" />
              <path d="M10.500 18.500Q15.500 14.500 20.500 18.500L15.500 24.500Z" fill="currentColor" stroke="none" />
            </svg>
          </StatusIcon>
          <StatusIcon $w={24} $gap={39}>
            <svg width="24" height="26" viewBox="0 0 24 26" fill="none" stroke="currentColor" strokeWidth="2.600" strokeLinecap="round">
              <circle cx="10" cy="10" r="8.500" /><path d="M16 17L22 24" strokeWidth="3.200" />
            </svg>
          </StatusIcon>
          <StatusIcon $w={28} $gap={34}>
            <svg width="28" height="28" viewBox="0 0 28 28">
              <rect x="1.200" y="1.200" width="25" height="11" rx="5.500" fill="none" stroke="currentColor" strokeWidth="2.300" /><circle cx="7" cy="6.700" r="3.600" fill="currentColor" />
              <rect y="16" width="27.500" height="12" rx="6" fill="currentColor" /><circle cx="21.500" cy="22" r="3.800" fill="#1d1b4b" />
            </svg>
          </StatusIcon>
          <StatusIcon $w={28} $gap={32}>
            <svg width="28" height="28" viewBox="0 0 28 28">
              <defs><linearGradient id="siri" x1=".3" y1="0" x2=".6" y2="1"><stop stopColor="#c2409c" /><stop offset=".45" stopColor="#3a3f86" /><stop offset="1" stopColor="#1d86c8" /></linearGradient></defs>
              <circle cx="14" cy="14" r="13.500" fill="url(#siri)" />
              <path d="M18 5Q24 8 26 13L17 13Z" fill="#ef4f86" opacity=".8" />
              <path d="M3 21Q11 16 13.500 14.500Q9 12 5 12Q11 11.500 14.500 13Q16 9 18 6Q17 11 16 13.500Q22 12 26 14Q20 16 15.500 15.500Q18 22 17 26Q14 20 14 16Q9 20 3 21Z" fill="#dffcff" />
            </svg>
          </StatusIcon>
          <Clock>{"Thu Jul 7  9:57 PM"}</Clock>
        </StatusIcons>
      </MenuBar>
      <MenuEdge />

      <Window>
        <TabStrip>
          <Lights>
            <Light $c="#ff5f57" />
            <Light $c="#febc3f" />
            <Light $c="#29c84a" />
          </Lights>
          <Tabs>
            {tabs.map((t) => (
              <TabBox key={t.title} $active={t.active} $line={t.line}>
                {t.icon}
                <TabTitle $fade={t.fade}>{t.title}</TabTitle>
                <TabEnd>
                  {t.rec && <RecordIcon />}
                  <Cross />
                </TabEnd>
              </TabBox>
            ))}
          </Tabs>
          <StripEnd>
            <svg width="24" height="24" viewBox="0 0 24 24" stroke="#fff" strokeWidth="3.200"><path d="M12 0V24M0 12H24" /></svg>
            <svg width="20" height="12" viewBox="0 0 20 12" fill="none" stroke="#fff" strokeWidth="3"><path d="M1.500 1.500L10 10L18.500 1.500" /></svg>
          </StripEnd>
        </TabStrip>

        <Toolbar>
          <NavButtons>
            <svg width="32" height="32" viewBox="0 0 32 32" fill="none" stroke="#fff" strokeWidth="3" strokeLinecap="round"><path d="M28 16H4M15 4.500L3.500 16L15 27.500" /></svg>
            <svg width="32" height="32" viewBox="0 0 32 32" fill="none" stroke="#82a3cb" strokeWidth="3" strokeLinecap="round"><path d="M4 16H28M17 4.500L28.500 16L17 27.500" /></svg>
            <svg width="32" height="32" viewBox="0 0 32 32" stroke="#fff" strokeWidth="3.200" strokeLinecap="round"><path d="M5 5L27 27M27 5L5 27" /></svg>
          </NavButtons>
          <Omnibox>
            <InfoIcon c="#bdbfc0" s={29} w={2.4} />
            <Url><Host>localhost</Host>:9021/clusters/cdg1hqgbTkaZlK1VSShE9w/brokers</Url>
            <OmniEnd>
              <svg width="30" height="30" viewBox="0 0 30 30" fill="none" stroke="#c0c1c2" strokeWidth="2.800">
                <path d="M11 10H6.500Q5.500 10 5.500 11.500V26Q5.500 28 7 28H23.500Q25 28 25 26V11.500Q25 10 23.500 10H19.500M15.200 19V2.500M10.500 7L15.200 2L20 7" />
              </svg>
              <svg width="30" height="30" viewBox="0 0 30 30" fill="none" stroke="#c0c1c2" strokeWidth="2.600">
                <path d="M15 3.500L18.100 11.300L27.300 12L20.300 18L22.700 27L15 22.100L7.300 27L9.700 18L2.700 12L11.900 11.300Z" />
              </svg>
            </OmniEnd>
          </Omnibox>
          <ToolEnd>
            <MdExtension size={34} />
            <PanelIcon width="28" height="28" viewBox="0 0 28 28"><path fillRule="evenodd" d="M0 0H28V28H0ZM4 4V24H18V4Z" fill="#fff" /></PanelIcon>
            <Avatar>J</Avatar>
            <PanelIcon width="8" height="28" viewBox="0 0 8 28" fill="#fff"><circle cx="4" cy="4" r="3.200" /><circle cx="4" cy="14" r="3.200" /><circle cx="4" cy="24" r="3.200" /></PanelIcon>
          </ToolEnd>
        </Toolbar>

        <Bookmarks>
          {bookmarks.map((b, i) => (
            <Bookmark key={i} $w={b.w}>
              {b.icon}
              <span>{b.name}</span>
            </Bookmark>
          ))}
        </Bookmarks>

        <Page>
          <PageHeader>
            <Brand>
              <ConfluentMark />
              CONFLUENT
            </Brand>
            <HeaderIcons>
              <BellIcon />
              <Burger />
            </HeaderIcons>
          </PageHeader>
          <Crumbs>
            HOME
            <CrumbChevron />
            CONTROLCENTER.CLUSTER
            <CrumbChevron />
          </Crumbs>
          <Body>
            <Sidebar>
              <NavList>
                {links.map((l) => <NavLink key={l.name} $state={l.state}>{l.name}</NavLink>)}
              </NavList>
              <HealthRow>
                Health+
                <NewPill>New</NewPill>
              </HealthRow>
            </Sidebar>
            <Main>
              <Banner>
                <InfoIcon c="#fff" s={31} w={2.8} />
                The latest available data for this cluster was an hour ago.
              </Banner>
              <Content>
                <Heading>Brokers overview</Heading>
                <Cards>
                  <MetricCard title="Production" value="15.87K" line={productionLine} />
                  <MetricCard title="Consumption" value="12.58K" line={consumptionLine} />
                  <Card $wide>
                    <CardTitle>Partitioning and replication</CardTitle>
                    <Stats>
                      {stats.map(([v, l]) => (
                        <div key={l}>
                          <Value>{v}</Value>
                          <Label>{l}</Label>
                        </div>
                      ))}
                    </Stats>
                  </Card>
                  <Card />
                  <Card />
                </Cards>
              </Content>
            </Main>
          </Body>
        </Page>

        <Shelf>
          <DownloadItem>
            <svg width="24" height="30" viewBox="0 0 24 30">
              <path d="M1 1H15L23 9V29H1Z" fill="#eceff1" /><path d="M15 1L23 9H15Z" fill="#cfd4d8" />
              <rect x="5" y="9" width="14" height="13" rx="3" fill="#dbe4ee" stroke="#8c949c" /><path d="M7 15H17V19H7Z" fill="#23344f" /><path d="M7 11H17V15H7Z" fill="#8fb6e8" />
              <path d="M7 26H17" stroke="#999" strokeWidth="2" strokeDasharray="2.500 1" />
            </svg>
            <FileName>screenshot.png</FileName>
            <Caret width="20" height="13" viewBox="0 0 20 13" fill="none" stroke="#fff" strokeWidth="3.200"><path d="M2 11L10 3L18 11" /></Caret>
          </DownloadItem>
          <ShelfSpace />
          <ShowAll>Show All</ShowAll>
          <Cross s={21} w={3.6} />
        </Shelf>
      </Window>
      <StatusBubble>localhost:9021/clusters/cdg1hqgbTkaZlK1VSShE9w/overview</StatusBubble>

      <Terminal>ache.kafka.common.metrics.Metrics)</Terminal>
      <DockArea>
        <Dock>
          {dockLeft.map((d, i) => <DockSlot key={i} {...d} />)}
          <DockLine $l={18} $r={15} />
          {dockApps.map((d, i) => <DockSlot key={i} {...d} />)}
          <DockLine $l={18} $r={24} />
          <DockWindows />
        </Dock>
      </DockArea>
    </Desktop>
  );
}
